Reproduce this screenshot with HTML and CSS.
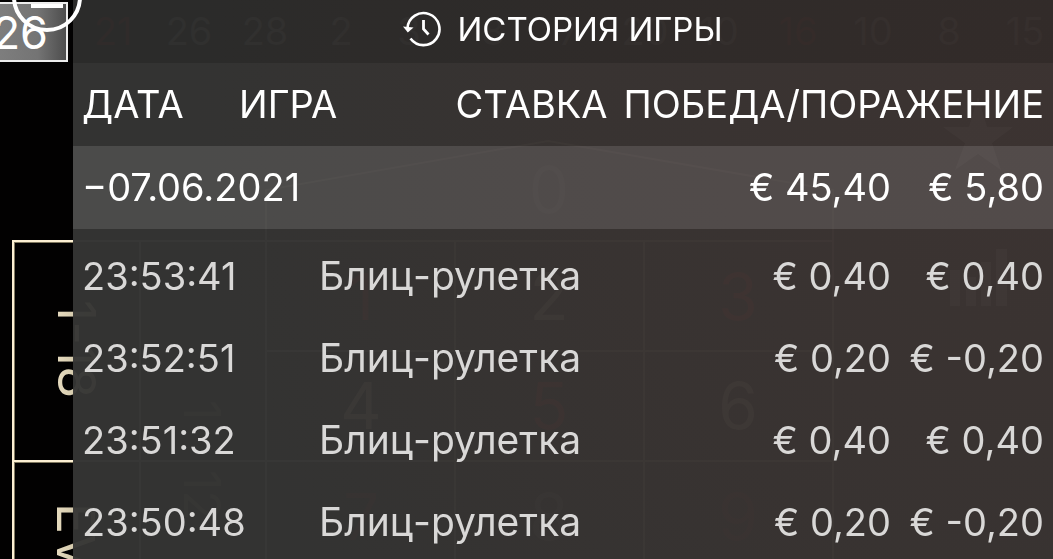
FILE: index.html
```html
<!DOCTYPE html>
<html lang="ru">
<head>
<meta charset="utf-8">
<title>История игры</title>
<link rel="stylesheet" href="styles.css">
</head>
<body>
<svg class="scene" width="1053" height="559" viewBox="0 0 1053 559" aria-hidden="true">
  <defs>
    <linearGradient id="tile" x1="0" x2="1" y1="0" y2="0">
      <stop offset="0" stop-color="#858585"/><stop offset=".7" stop-color="#747474"/><stop offset="1" stop-color="#4c4c4c"/>
    </linearGradient>
    <linearGradient id="gold" x1="0" x2="0" y1="1" y2="0">
      <stop offset="0" stop-color="#f1e6cb"/><stop offset="1" stop-color="#b5aa8a"/>
    </linearGradient>
  </defs>
  <g class="ghost-numbers">
    <text x="113" y="45" class="red">21</text><text x="189" y="45">26</text><text x="265" y="45">28</text>
    <text x="341" y="45">2</text><text x="409" y="45">3</text><text x="493" y="45">8</text>
    <text x="569" y="45">7</text><text x="645" y="45">20</text><text x="719" y="45">10</text>
    <text x="798" y="45" class="red">16</text><text x="873" y="45">10</text><text x="949" y="45">8</text><text x="1025" y="45">15</text>
  </g>
  <g class="ghost-lines">
    <path d="M73 241H833M266 351H833M73 461H833M140 241V559M266 559V190L548 141L833 190V559M455 241V559M644 241V559"/>
  </g>
  <g class="ghost-board">
    <text x="549" y="213" class="dim">0</text>
    <text x="361" y="320" class="red">1</text><text x="549" y="320">2</text><text x="738" y="320" class="red">3</text>
    <text x="361" y="429">4</text><text x="549" y="429" class="red">5</text><text x="738" y="429">6</text>
    <text x="361" y="540" class="red dim">7</text><text x="549" y="540" class="dim">8</text><text x="738" y="540" class="red dim">9</text>
  </g>
  <text class="ghost-dozen" transform="translate(184 400) rotate(90)">1</text>
  <text class="ghost-dozen" transform="translate(184 470) rotate(90)">12</text>
  <path class="ghost-shape" d="M978 97L987 127H1013L992 143L1001 170L978 154L955 170L965 143L943 127H969Z"/>
  <path class="ghost-shape" d="M950 270h10v36h-10zM966 277h10v29h-10zM981 262h10v44h-10zM996 249h11v57h-11z"/>
  <path class="gold-line-shade" d="M73 242H14V559M14 462H73"/>
  <path class="gold-line" d="M73 241H13V559M13 461H73"/>
  <text class="gold-text" transform="translate(58 300) rotate(90)">1-18</text>
  <text class="gold-text" transform="translate(57 503) rotate(90)">EVEN</text>
  <rect x="-30" y="3" width="97" height="58" fill="url(#tile)" stroke="#ededed" stroke-width="2"/>
  <text class="last-number" x="48" y="49">26</text>
</svg>

<main class="panel">
  <header class="panel-title">
    <svg class="history-icon" viewBox="0 0 38 36" aria-hidden="true">
      <path d="M4.500 17A16 16 0 1 1 7.500 27.500" fill="none" stroke="#fff" stroke-width="2.600"/>
      <path d="M0 15.500L10.500 16.500L4.800 21.500Z" fill="#fff"/>
      <path d="M20.500 9V18L25.500 23.500" fill="none" stroke="#fff" stroke-width="2.800"/>
    </svg>
    <h1>ИСТОРИЯ ИГРЫ</h1>
  </header>
  <table class="history">
    <thead>
      <tr class="columns">
        <th class="date">ДАТА</th><th>ИГРА</th><th class="bet">СТАВКА</th><th class="result">ПОБЕДА/ПОРАЖЕНИЕ</th>
      </tr>
    </thead>
    <tbody>
      <tr class="summary">
        <th><button type="button" aria-expanded="true">−07.06.2021</button></th><td class="bet">€ 45,40</td><td class="result">€ 5,80</td>
      </tr>
    </tbody>
    <tbody class="rounds">
      <tr><td class="time">23:53:41</td><td class="game">Блиц-рулетка</td><td class="bet">€ 0,40</td><td class="result">€ 0,40</td></tr>
      <tr><td class="time">23:52:51</td><td class="game">Блиц-рулетка</td><td class="bet">€ 0,20</td><td class="result">€ -0,20</td></tr>
      <tr><td class="time">23:51:32</td><td class="game">Блиц-рулетка</td><td class="bet">€ 0,40</td><td class="result">€ 0,40</td></tr>
      <tr><td class="time">23:50:48</td><td class="game">Блиц-рулетка</td><td class="bet">€ 0,20</td><td class="result">€ -0,20</td></tr>
    </tbody>
  </table>
</main>

<button class="menu" type="button" aria-label="Меню">
  <svg width="84" height="34" viewBox="0 0 84 34" aria-hidden="true">
    <circle cx="47" cy="-3" r="33" fill="none" stroke="#fff" stroke-width="4"/>
    <path d="M31 6H63" stroke="#fff" stroke-width="4"/>
  </svg>
</button>
</body>
</html>
```
FILE: styles.css
```css
* { box-sizing: border-box; }
body {
  margin: 0;
  min-height: 100vh;
  padding-left: 73px;
  overflow: hidden;
  display: flex;
  background: #020101;
  color: #fff;
  font-family: Inter, "Noto Sans", sans-serif;
}
.scene { position: absolute; top: 0; left: 0; }
.ghost-numbers { font-size: 38px; text-anchor: middle; fill: #fff; opacity: .5; }
.ghost-board { font-size: 64px; text-anchor: middle; fill: #fff0d0; opacity: .55; }
.ghost-numbers .red, .ghost-board .red { fill: #ff2020; }
.ghost-board .dim { opacity: .5; }
.ghost-lines { fill: none; stroke: #fff0d0; stroke-width: 2; opacity: .45; }
.ghost-dozen { font-size: 50px; fill: #fff0d0; opacity: .3; }
.ghost-shape { fill: #fff; opacity: .55; }
.gold-line { fill: none; stroke: #fdf0d3; stroke-width: 2; }
.gold-line-shade { fill: none; stroke: #80785f; stroke-width: 2; }
.gold-text { font-size: 52px; fill: url(#gold); }
.last-number { font-size: 45px; text-anchor: end; fill: #fff; }
.menu {
  position: absolute;
  top: 0;
  left: 0;
  padding: 0;
  border: 0;
  background: none;
}
.menu svg { display: block; }

.panel {
  position: relative;
  flex: 1;
  min-width: 0;
  background:
    radial-gradient(circle at 100% 20%, rgba(100, 52, 46, .18), rgba(88, 50, 44, .13) 45%, transparent 80%),
    rgba(53, 53, 52, .96);
}
.panel-title {
  display: flex;
  align-items: center;
  justify-content: center;
  gap: 16px;
  height: 63px;
  padding-bottom: 5px;
  background: rgba(0, 0, 0, .15);
}
.panel-title h1 { margin: 0; font-size: 33px; line-height: 40px; font-weight: 400; }
.history-icon { width: 38px; height: 36px; }

.history, .history thead, .history tbody { display: block; }
.history tr {
  display: flex;
  align-items: center;
  height: 82px;
  padding: 0 9px;
  white-space: nowrap;
  font-size: 38px;
  line-height: 48px;
}
.history th, .history td { padding: 0; font-weight: 400; text-align: left; }
.history .columns, .history .summary { height: 83px; padding-bottom: 2px; }
.history .summary { background: rgba(255, 255, 255, .12); }
.history .bet { margin-left: auto; text-align: right; }
.history .result { width: 153px; text-align: right; }
.columns .date { width: 157px; }
.history .columns .result { width: auto; padding-left: 16px; }
.rounds { padding-top: 6px; color: #d9d8d7; }
.rounds .time { width: 237px; }
.rounds .game { font-size: 39px; }
.summary button {
  padding: 0;
  border: 0;
  background: none;
  color: inherit;
  font: inherit;
}
```
